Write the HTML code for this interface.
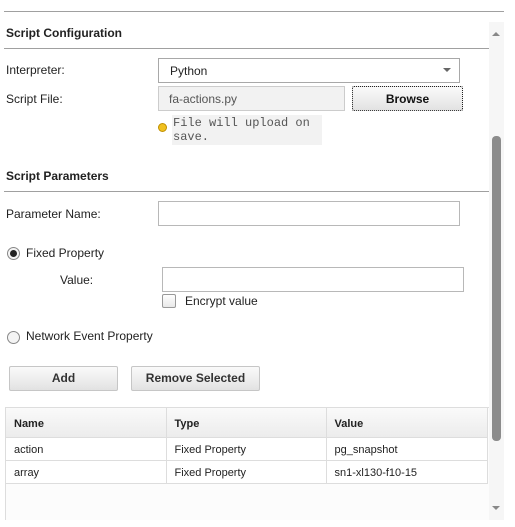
<!DOCTYPE html>
<html><head><style>
*{box-sizing:border-box;margin:0;padding:0}
body{width:515px;height:527px;background:#fff;font-family:"Liberation Sans",Arial,sans-serif;font-size:12px;color:#222;position:relative;overflow:hidden}
.a{position:absolute}
.hl{position:absolute;height:1px;background:#a0a0a0}
.h{font-weight:bold;font-size:12px;color:#222}
.inp{position:absolute;border:1px solid #b8b8b8;background:#fff}
.btn{position:absolute;border:1px solid #c6c6c6;border-radius:2px;background:linear-gradient(#fafafa,#e2e2e2);font-weight:bold;text-align:center;color:#333}
td{border-right:1px solid #ddd;border-bottom:1px solid #ddd;padding-left:8px;padding-top:3px;font-size:11px}
</style></head><body>
<div class="hl" style="left:4px;top:11px;width:500px"></div>
<div class="a h" style="left:6px;top:26px">Script Configuration</div>
<div class="hl" style="left:4px;top:48px;width:485px"></div>
<div class="a" style="left:6px;top:63px">Interpreter:</div>
<div class="inp" style="left:158px;top:58px;width:302px;height:25px;border-color:#a8a8a8"><span class="a" style="left:11px;top:5px">Python</span><span class="a" style="right:8px;top:9px;width:0;height:0;border-left:4px solid transparent;border-right:4px solid transparent;border-top:4px solid #666"></span></div>
<div class="a" style="left:6px;top:92px">Script File:</div>
<div class="inp" style="left:158px;top:86px;width:187px;height:25px;background:#f2f2f2;border-color:#ccc"><span class="a" style="left:10px;top:5px;color:#555">fa-actions.py</span></div>
<div class="btn" style="left:352px;top:86px;width:111px;height:25px;border:1px dotted #222;line-height:25px;color:#111">Browse</div>
<div class="a" style="left:158px;top:123px;width:9px;height:9px;border-radius:50%;background:#f0c020;border:1px solid #c09000"></div>
<div class="a" style="left:172px;top:115px;width:150px;height:30px;background:#f2f2f2;font-family:'Liberation Mono',monospace;font-size:12px;color:#555;line-height:14px;padding:1px 0 0 1px">File will upload on<br>save.</div>
<div class="a h" style="left:6px;top:169px">Script Parameters</div>
<div class="hl" style="left:4px;top:191px;width:485px"></div>
<div class="a" style="left:6px;top:207px">Parameter Name:</div>
<div class="inp" style="left:158px;top:201px;width:302px;height:25px"></div>
<div class="a" style="left:7px;top:247px;width:13px;height:13px;border-radius:50%;border:1px solid #888;background:#f4f4f4"><div class="a" style="left:2px;top:2px;width:7px;height:7px;border-radius:50%;background:#222"></div></div>
<div class="a" style="left:26px;top:246px">Fixed Property</div>
<div class="a" style="left:60px;top:273px">Value:</div>
<div class="inp" style="left:162px;top:267px;width:302px;height:25px"></div>
<div class="a" style="left:162px;top:294px;width:14px;height:14px;border:1px solid #999;border-radius:2px;background:linear-gradient(#fff,#e8e8e8)"></div>
<div class="a" style="left:185px;top:294px">Encrypt value</div>
<div class="a" style="left:7px;top:331px;width:13px;height:13px;border-radius:50%;border:1px solid #888;background:#f4f4f4"></div>
<div class="a" style="left:26px;top:329px">Network Event Property</div>
<div class="btn" style="left:9px;top:366px;width:109px;height:25px;line-height:23px">Add</div>
<div class="btn" style="left:131px;top:366px;width:129px;height:25px;line-height:23px">Remove Selected</div>
<div class="a" style="left:5px;top:407px;width:484px;height:113px;background:#fcfcfc;border-left:1px solid #ddd;border-top:1px solid #ddd"></div>
<table class="a" style="left:6px;top:408px;width:482px;border-collapse:collapse;background:#fff">
<tr style="height:29px;background:linear-gradient(#fafafa,#ececec);font-weight:bold"><td style="width:160px;font-weight:bold">Name</td><td style="width:160px;font-weight:bold">Type</td><td style="font-weight:bold">Value</td></tr>
<tr style="height:23px"><td>action</td><td>Fixed Property</td><td>pg_snapshot</td></tr>
<tr style="height:23px"><td>array</td><td>Fixed Property</td><td>sn1-xl130-f10-15</td></tr>
</table>
<div class="a" style="left:489px;top:22px;width:15px;height:498px;background:#f6f6f6"></div>
<div class="a" style="left:492px;top:32px;width:0;height:0;border-left:4px solid transparent;border-right:4px solid transparent;border-bottom:4px solid #888"></div>
<div class="a" style="left:492px;top:506px;width:0;height:0;border-left:4px solid transparent;border-right:4px solid transparent;border-top:4px solid #888"></div>
<div class="a" style="left:492px;top:136px;width:9px;height:305px;border-radius:4px;background:#8c8c8c"></div>
</body></html>
